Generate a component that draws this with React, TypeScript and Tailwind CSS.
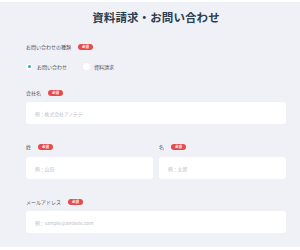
import React from 'react';

const font = { fontFamily: '"Noto Sans CJK JP", "Noto Sans", sans-serif' };

const Badge: React.FC = () => (
  <span className="flex h-[6px] w-[15px] items-center justify-center rounded-full bg-[#e64b4b] text-[3.5px] font-bold leading-none text-white">
    必須
  </span>
);

const Label: React.FC<{ text: string }> = ({ text }) => (
  <div className="flex h-[6px] items-center gap-[7px]">
    <span className="text-[5px] leading-[6px] text-[#51565e]">{text}</span>
    <Badge />
  </div>
);

const Field: React.FC<{ placeholder: string }> = ({ placeholder }) => (
  <input
    className="block h-[22px] w-full rounded-[3px] bg-white px-[9px] text-[4.8px] leading-none outline-none placeholder:text-[#b9bdc5]"
    placeholder={placeholder}
    style={font}
  />
);

export default function App() {
  return (
    <div className="h-[250px] w-[300px] bg-white pt-[2px]" style={font}>
      <div className="h-[245px] bg-[#f0f1f6] pl-[26px] pr-[14px] pt-[9px]">
        {/* Title */}
        <h1 className="text-center text-[11.5px] font-bold leading-[12px] tracking-[0.1px] text-[#2c3e50]">
          資料請求・お問い合わせ
        </h1>

        {/* Inquiry type */}
        <div className="mt-[21px]">
          <Label text="お問い合わせの種類" />
          <div className="mt-[13px] flex h-[7px] items-center">
            <span className="flex h-[6px] w-[6px] items-center justify-center rounded-full bg-white">
              <span className="h-[3px] w-[3px] rounded-full bg-[#3aa3c2]" />
            </span>
            <span className="ml-[5px] text-[5px] leading-[6px] text-[#51565e]">お問い合わせ</span>
            <span className="ml-[16px] h-[7px] w-[7px] rounded-full bg-white" />
            <span className="ml-[4px] text-[5px] leading-[6px] text-[#51565e]">資料請求</span>
          </div>
        </div>

        {/* Company */}
        <div className="mt-[20px]">
          <Label text="会社名" />
          <div className="mt-[6px]">
            <Field placeholder="例：株式会社アノテテ" />
          </div>
        </div>

        {/* Name */}
        <div className="mt-[20px] grid grid-cols-2 gap-[6px]">
          <div>
            <Label text="姓" />
            <div className="mt-[7px]">
              <Field placeholder="例：山田" />
            </div>
          </div>
          <div>
            <Label text="名" />
            <div className="mt-[7px]">
              <Field placeholder="例：太郎" />
            </div>
          </div>
        </div>

        {/* Email */}
        <div className="mt-[20px]">
          <Label text="メールアドレス" />
          <div className="mt-[6px]">
            <Field placeholder="例：sample@anotete.com" />
          </div>
        </div>
      </div>
    </div>
  );
}
